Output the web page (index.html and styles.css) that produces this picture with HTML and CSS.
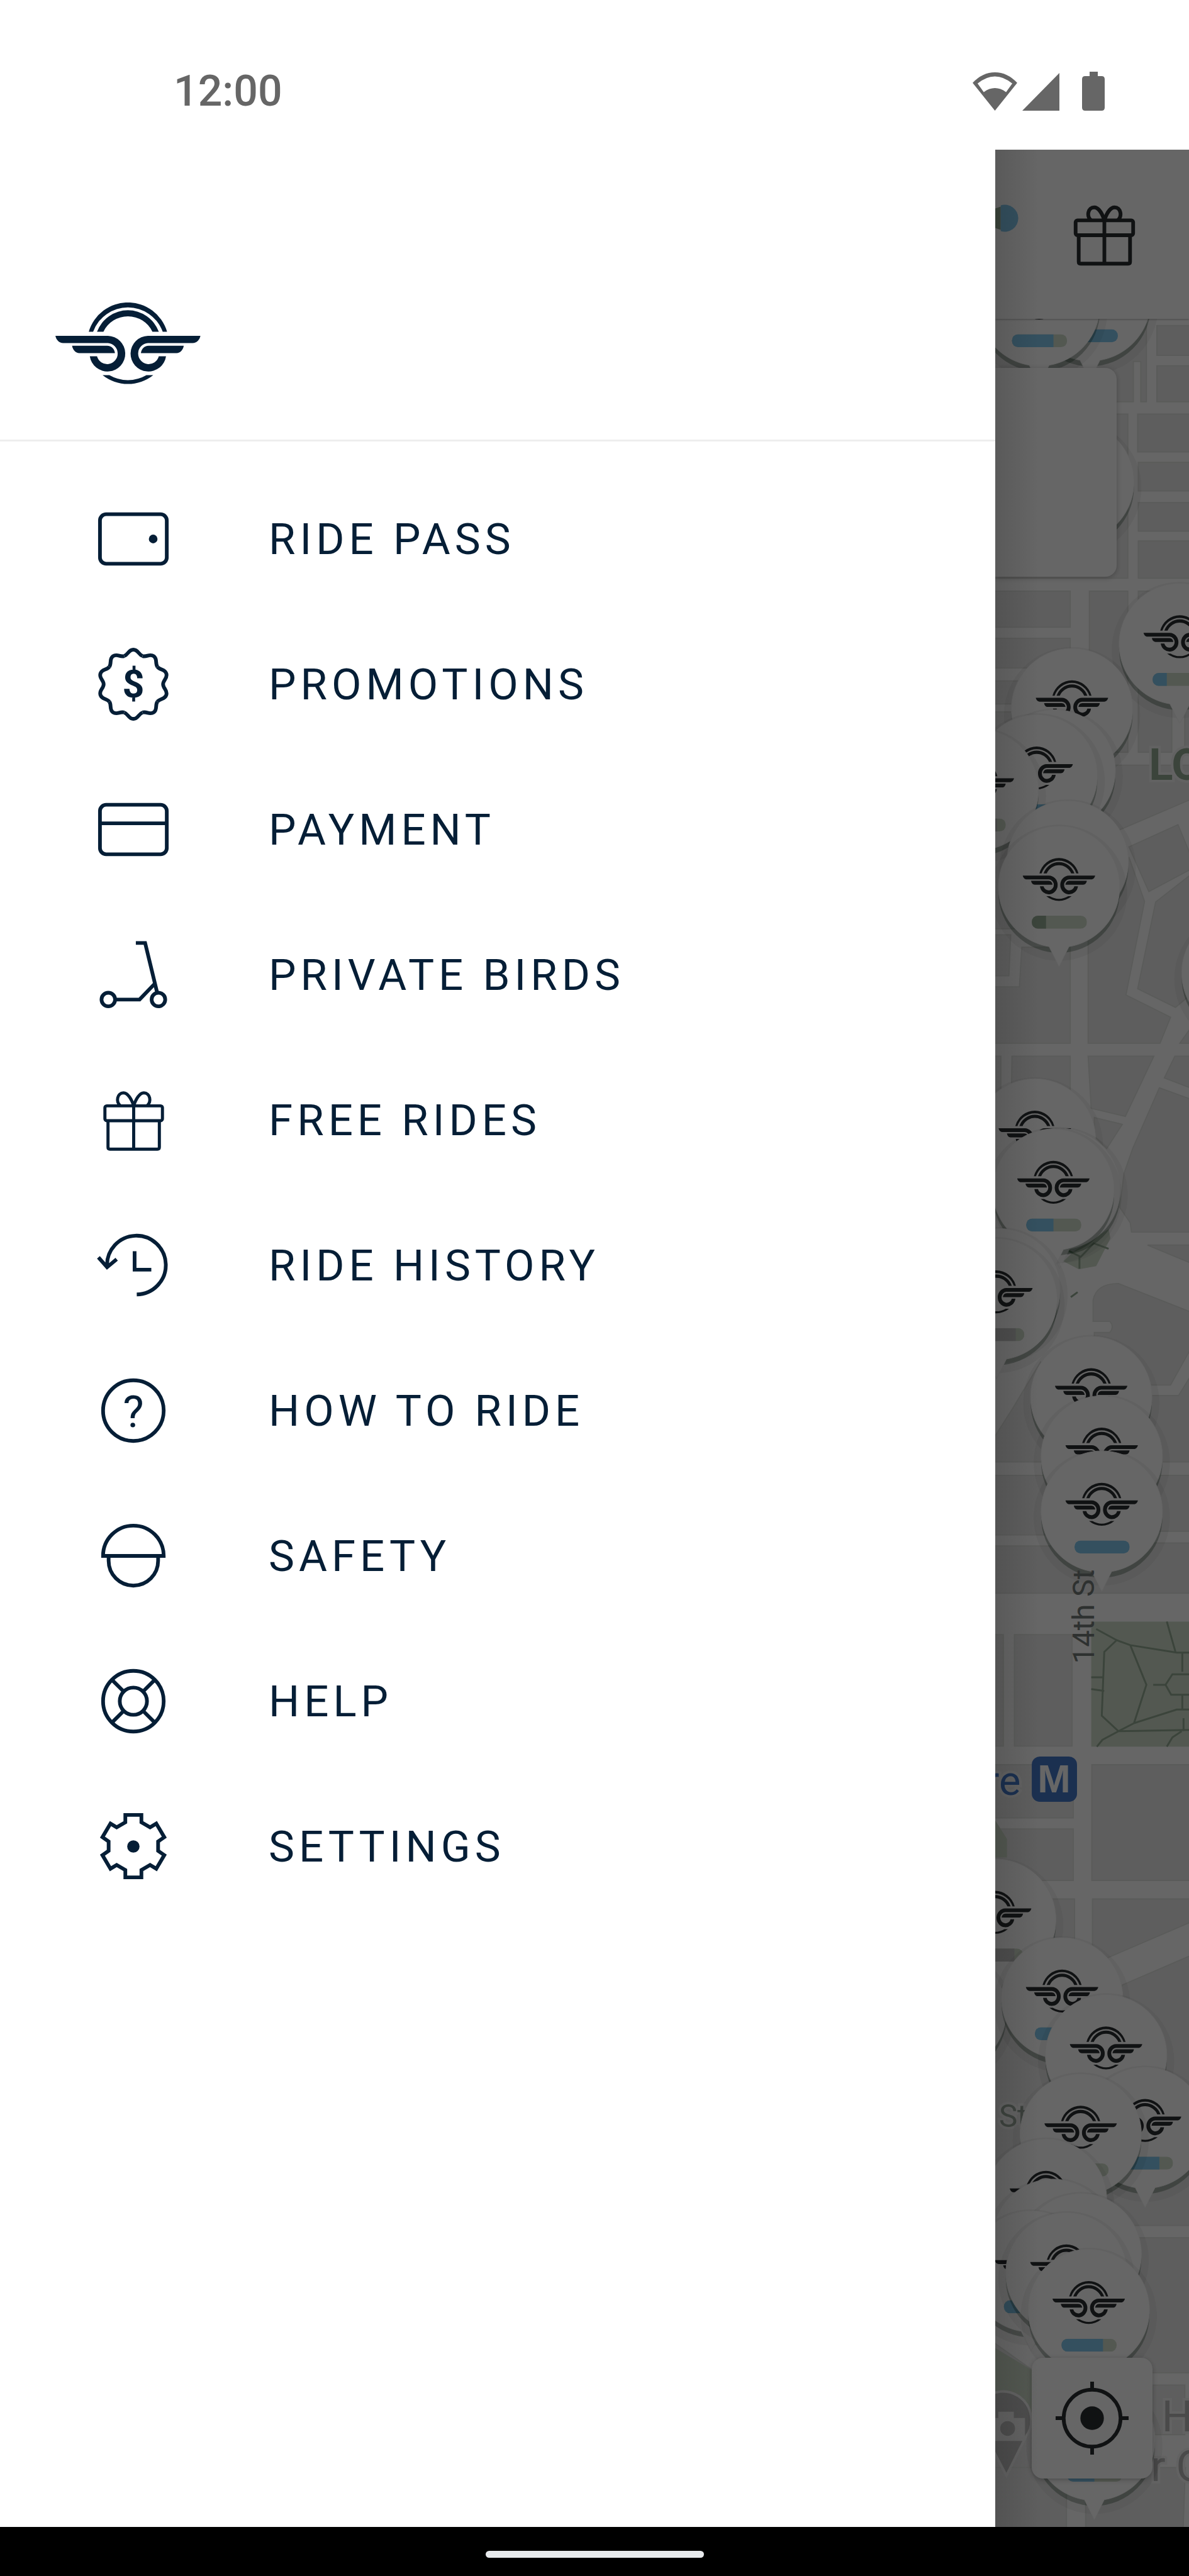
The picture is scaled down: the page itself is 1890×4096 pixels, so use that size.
FILE: index.html
```html
<!DOCTYPE html>
<html lang="en">
<head>
    <meta charset="UTF-8">
    <meta name="viewport" content="width=device-width, initial-scale=1.0">
    <title>Bird - Menu</title>
    <link rel="stylesheet" href="styles.css">
</head>
<body>
    <!-- Shared shapes -->
    <svg class="sprite" aria-hidden="true">
        <defs>
            <g id="half-logo">
                <path d="M87 247H342A86.500 86.500 0 1 1 254 346H289A51 51 0 1 0 342 282H125C104 282 91 266 87 247Z"/>
                <path d="M168 295H338C360 295 374 312 376 331H203C185 331 171 315 168 295Z"/>
            </g>
            <g id="logo">
                <path d="M249 227A198 198 0 0 1 629 227H608A180 180 0 0 0 270 227Z"/>
                <path d="M289 227A160 160 0 0 1 589 227H558A132 132 0 0 0 320 227Z"/>
                <use href="#half-logo"/>
                <use href="#half-logo" transform="translate(878) scale(-1 1)"/>
                <path d="M316 438H349A180 180 0 0 0 529 438H562A198 198 0 0 1 316 438Z"/>
            </g>
            <symbol id="gift" viewBox="0 0 120 120">
                <rect x="14" y="37" width="93" height="24" rx="3"/>
                <path d="M19 61V104Q19 107 22 107H99Q102 107 102 104V61M60.500 37V107"/>
                <path d="M60.500 37C57 26 51 16 44 16C34 16 31 30 39 37M60.500 37C64 26 70 16 77 16C87 16 90 30 82 37"/>
            </symbol>
            <path id="wave" d="M45.200 14.300C51.900 12.100 52 4 60 4S68.100 12.100 74.800 14.300"/>
            <g id="pin">
                <circle class="pin-glow" cy="8" r="110"/>
                <circle class="pin-shadow" cy="7" r="98"/>
                <path class="pin-body" d="M-16 95L0 127L16 95A98 98 0 1 0 -16 95Z"/>
                <use class="pin-logo" href="#logo" transform="translate(-73 -70) scale(.166 .175) translate(0 40)"/>
            </g>
            <clipPath id="bar-clip"><rect x="-44" y="45" width="89" height="21" rx="10"/></clipPath>
            <g id="pin-full"><use href="#pin"/><path class="bar-blue" clip-path="url(#bar-clip)" d="M-45 45H45V66H-45Z"/></g>
            <g id="pin-high"><use href="#pin"/><g clip-path="url(#bar-clip)"><path class="bar-rest" d="M-45 45H45V66H-45Z"/><path class="bar-blue" d="M-45 45H23V66H-45Z"/></g></g>
            <g id="pin-half"><use href="#pin"/><g clip-path="url(#bar-clip)"><path class="bar-rest" d="M-45 45H45V66H-45Z"/><path class="bar-blue" d="M-45 45H0V66H-45Z"/></g></g>
            <g id="pin-low"><use href="#pin"/><g clip-path="url(#bar-clip)"><path class="bar-rest" d="M-45 45H45V66H-45Z"/><path class="bar-blue" d="M-45 45H-21V66H-45Z"/></g></g>
            <g id="pin-empty"><use href="#pin"/><g clip-path="url(#bar-clip)"><path class="bar-rest" d="M-45 45H45V66H-45Z"/><path class="bar-green" d="M-45 45H-21V66H-45Z"/></g></g>
            <g id="pin-grey"><use href="#pin"/><g clip-path="url(#bar-clip)"><path class="bar-rest" d="M-45 45H45V66H-45Z"/><path class="bar-grey" d="M-45 45H31V66H-45Z"/></g></g>
        </defs>
    </svg>

    <header class="status-bar">
        <time>12:00</time>
        <div class="status-icons">
            <svg width="71" height="61" viewBox="0 0 72 62"><path fill-rule="evenodd" d="M36 62L0 17Q16 0 36 0T72 17ZM8 18L18 32Q36 19 54 32L64 18Q36-5 8 18Z"/></svg>
            <svg width="59" height="61" viewBox="0 0 60 62"><path d="M60 1V62H0Z"/></svg>
            <svg class="battery" width="36" height="62" viewBox="0 0 36 62"><path d="M12 0H25V7H31Q36 7 36 12V57Q36 62 31 62H5Q0 62 0 57V12Q0 7 5 7H12Z"/></svg>
        </div>
    </header>

    <main class="screen">
        <nav class="drawer" aria-label="Main menu">
            <div class="drawer-header">
                <svg class="brand" viewBox="87 85 705 397" role="img" aria-label="Bird"><use href="#logo"/></svg>
            </div>
            <ul class="menu">
                <li><a href="#">
                    <svg class="icon" viewBox="0 0 120 120"><rect x="6" y="20" width="108" height="80" rx="10"/><circle class="solid" cx="92" cy="60" r="7"/></svg>
                    <span>RIDE PASS</span>
                </a></li>
                <li><a href="#">
                    <svg class="icon" viewBox="0 0 120 120">
                        <use href="#wave"/><use href="#wave" transform="rotate(36 60 60)"/><use href="#wave" transform="rotate(72 60 60)"/>
                        <use href="#wave" transform="rotate(108 60 60)"/><use href="#wave" transform="rotate(144 60 60)"/><use href="#wave" transform="rotate(180 60 60)"/>
                        <use href="#wave" transform="rotate(216 60 60)"/><use href="#wave" transform="rotate(252 60 60)"/><use href="#wave" transform="rotate(288 60 60)"/>
                        <use href="#wave" transform="rotate(324 60 60)"/>
                        <text class="dollar" x="60" y="81">$</text>
                    </svg>
                    <span>PROMOTIONS</span>
                </a></li>
                <li><a href="#">
                    <svg class="icon" viewBox="0 0 120 120"><rect x="6" y="20" width="108" height="80" rx="10"/><path d="M6 50H114"/></svg>
                    <span>PAYMENT</span>
                </a></li>
                <li><a href="#">
                    <svg class="icon" viewBox="0 0 120 120"><circle cx="19.500" cy="100" r="11"/><circle cx="100.500" cy="100" r="11"/><path d="M64 8.500H79L98.500 89M31 100H70L94 75"/></svg>
                    <span>PRIVATE BIRDS</span>
                </a></li>
                <li><a href="#">
                    <svg class="icon thin"><use href="#gift"/></svg>
                    <span>FREE RIDES</span>
                </a></li>
                <li><a href="#">
                    <svg class="icon" viewBox="0 0 120 120"><path d="M65.500 107A47.500 47.500 0 1 0 17.500 62M3.500 47L17.500 63L33 50M62 37V67H89"/></svg>
                    <span>RIDE HISTORY</span>
                </a></li>
                <li><a href="#">
                    <svg class="icon" viewBox="0 0 120 120"><circle cx="60" cy="60" r="49"/><text class="question" x="60" y="86">?</text></svg>
                    <span>HOW TO RIDE</span>
                </a></li>
                <li><a href="#">
                    <svg class="icon" viewBox="0 0 120 120"><path d="M11 60A49 49 0 0 1 109 60ZM20 60V68A40 40 0 0 0 100 68V60"/></svg>
                    <span>SAFETY</span>
                </a></li>
                <li><a href="#">
                    <svg class="icon" viewBox="0 0 120 120"><circle cx="60" cy="60" r="49"/><circle cx="60" cy="60" r="22"/><path d="M25 25L44 44M95 25L76 44M25 95L44 76M95 95L76 76"/></svg>
                    <span>HELP</span>
                </a></li>
                <li><a href="#">
                    <svg class="icon" viewBox="0 0 120 120"><path d="M47 9H73V21L87 29L97 23L110 45L100 52V67L110 74L97 96L87 90L73 98V110H47V98L33 90L23 96L10 74L20 67V52L10 45L23 23L33 29L47 21Z"/><circle class="solid" cx="60" cy="60" r="10"/></svg>
                    <span>SETTINGS</span>
                </a></li>
            </ul>
        </nav>

        <section class="map" aria-label="Map">
            <svg class="map-canvas" viewBox="1607 242 313 3839" preserveAspectRatio="xMinYMin slice">
                <!-- City blocks -->
                <g class="blocks">
                    <path d="M1868 526H1930V574H1868ZM1868 591H1930V649H1868ZM1837 669H1930V730H1837ZM1838 747H1930V793H1838ZM1838 812H1930V858H1838ZM1838 874H1930V934H1838Z"/>
                    <path d="M1600 500H1851V649H1842V584H1830V649H1600ZM1600 669H1821V934H1600Z"/>
                    <path d="M1600 955H1728V1013H1600ZM1600 1031H1728V1079H1600ZM1600 1100H1728V1137H1600ZM1600 1150H1728V1500H1600ZM1759 955H1821V1215H1759ZM1838 955H1930V1140H1892V1215H1838ZM1913 1140H1930V1215H1913Z"/>
                    <path d="M1759 1236H1930V1288L1806 1341L1759 1330ZM1823 1368L1902 1332L1930 1400L1855 1440ZM1757 1390L1823 1385L1848 1456L1818 1607L1890 1643L1873 1685H1757ZM1866 1457L1930 1407V1600L1898 1627L1837 1597Z"/>
                    <path d="M1600 1510H1632L1629 1576H1600ZM1650 1530H1728V1685H1600V1594H1646ZM1600 1706H1616V1800H1600ZM1634 1706H1728V1880H1632ZM1757 1706H1863L1817 1803L1762 1790ZM1905 1685L1930 1650V1685ZM1897 1706H1930V1760L1880 1741ZM1872 1757L1930 1778V1990H1827L1825 1975L1808 1950L1815 1895L1829 1855ZM1767 1805L1812 1816L1787 1855L1767 1835Z"/>
                    <path d="M1853 2011H1930V2043ZM1765 2100Q1770 2073 1806 2073L1930 2122V2165L1890 2237H1767V2152H1792Q1800 2143 1792 2134H1765ZM1635 2275L1680 2200L1720 2300L1700 2361H1607L1600 2330ZM1700 2254H1903L1930 2210V2361H1700Z"/>
                    <path d="M1600 2383H1930V2473H1700V2479H1600ZM1600 2497H1700V2492H1930V2573H1600ZM1600 2640H1620V2820H1600ZM1638 2640H1731V2820H1638Z"/>
                    <path d="M1600 2850H1733V2936H1600ZM1763 2850H1930V3037H1763ZM1600 2954H1733V3037H1600ZM1600 3067H1735V3600H1600ZM1764 3067H1930V3101L1788 3162L1764 3150ZM1812 3206L1930 3155V3594H1700ZM1820 3614H1930V3832H1820ZM1600 3780L1670 3830V3985H1600ZM1861 3852H1913V3932H1861ZM1600 3985H1722V4090H1600ZM1753 3985H1914L1910 4090H1753Z"/>
                </g>
                <path class="park" d="M1762 2619H1930V2821H1762ZM1717 2037L1735 2020L1790 1985L1793 2000L1770 2045L1742 2050ZM1607 2940L1626 2970V3000H1607ZM1607 3792L1670 3830V3925L1607 3870Z"/>
                <path class="park-path" d="M1770 2631L1803 2649L1825 2657L1900 2669H1930M1803 2649L1783 2668L1779 2771L1806 2796L1924 2794M1825 2657L1851 2721L1831 2783L1900 2761H1930M1762 2709H1781M1762 2728L1783 2731M1862 2721H1882L1893 2704H1930M1882 2721L1891 2737H1930M1884 2619L1898 2668M1909 2670V2700M1909 2738V2760M1911 2775V2796M1806 2796L1831 2783M1806 2796L1780 2810L1771 2821M1908 2796L1893 2806L1884 2821"/>
                <path class="park-path" d="M1725 2020L1745 2030L1766 2008L1790 2017M1743 2028V2049M1729 2095L1740 2087"/>

                <!-- Labels -->
                <text class="label label-area" x="1855" y="1260">LO</text>
                <text class="label label-metro" x="1648" y="2899" text-anchor="end">re</text>
                <rect class="metro" x="1666" y="2837" width="73" height="73" rx="13"/>
                <text class="metro-m" x="1702" y="2895">M</text>
                <text class="label label-street" x="1613" y="3435">St</text>
                <text class="label label-place" x="1876" y="3927">H</text>
                <text class="label label-place" x="1858" y="4007">r C</text>

                <!-- Photo spot -->
                <path class="photo-pin" d="M1625 3998L1600 3950A46 46 0 1 1 1656 3936Z"/>
                <path class="photo-camera" d="M1604 3905H1612V3895H1637V3905H1655V3942H1604Z"/>
                <circle class="photo-lens" cx="1627" cy="3922" r="12"/>

                <!-- Vehicles, back to front -->
                <use href="#pin-full" x="1760" y="487"/>
                <use href="#pin-high" x="1678" y="495"/>
                <use href="#pin" x="1733" y="780"/>
                <use href="#pin-low" x="1905" y="1042"/>
                <use href="#pin" x="1731" y="1147"/>
                <use href="#pin" x="1703" y="1246"/>
                <use href="#pin-high" x="1674" y="1254"/>
                <use href="#pin-grey" x="1579" y="1277"/>
                <use href="#pin" x="1724" y="1393"/>
                <use href="#pin-empty" x="1710" y="1434"/>
                <use href="#pin" x="2006" y="1573"/>
                <use href="#pin" x="1671" y="1842"/>
                <use href="#pin" x="1711" y="1922"/>
                <use href="#pin-half" x="1701" y="1923"/>
                <use href="#pin" x="1614" y="2084"/>
                <use href="#pin-grey" x="1609" y="2100"/>
                <use href="#pin" x="1762" y="2258"/>
                <use href="#pin" x="1779" y="2354"/>
                <use href="#pin-full" x="1779" y="2443"/>
                <text class="label-14th" transform="translate(1766 2687) rotate(-90)">14th St</text>
                <use href="#pin" x="1520" y="3160"/>
                <use href="#pin-grey" x="1607" y="3102"/>
                <use href="#pin" x="1527" y="3250"/>
                <use href="#pin-half" x="1715" y="3229"/>
                <use href="#pin" x="1786" y="3321"/>
                <use href="#pin-high" x="1849" y="3438"/>
                <use href="#pin-low" x="1745" y="3449"/>
                <use href="#pin" x="1689" y="3554"/>
                <use href="#pin" x="1700" y="3619"/>
                <use href="#pin" x="1745" y="3642"/>
                <use href="#pin-half" x="1665" y="3670"/>
                <use href="#pin" x="1722" y="3673"/>
                <use href="#pin-half" x="1767" y="3942"/>
                <use href="#pin-high" x="1758" y="3732"/>
            </svg>

            <div class="map-bar">
                <svg class="ride-dot" width="38" height="44" viewBox="0 0 39 44"><path class="ride-dot-rest" d="M0 6L9 3V41L0 38Z"/><path class="ride-dot-fill" d="M9 1A22 22 0 1 1 9 43Z"/></svg>
                <button class="icon-button" type="button" aria-label="Free rides"><svg class="icon"><use href="#gift"/></svg></button>
            </div>
            <div class="map-card"></div>
            <button class="locate-button" type="button" aria-label="My location">
                <svg class="icon" viewBox="0 0 120 120"><circle cx="60" cy="60" r="46"/><path d="M60 1V13M60 107V119M1 60H13M107 60H119"/><circle class="solid" cx="60" cy="60" r="19"/></svg>
            </button>
            <div class="scrim"></div>
        </section>
    </main>

    <footer class="nav-bar"><span class="nav-handle"></span></footer>
</body>
</html>
```

FILE: styles.css
```css
:root {
    --ink: #051e36;
    --map-ink: #2a2d30;
    --status: #666666;
    --line: #eeeeee;
    --blue: #82c8ee;
    --green: #d0dccb;
    --green-dark: #94aa94;
}

* {
    margin: 0;
    padding: 0;
    box-sizing: border-box;
}

body {
    display: flex;
    flex-direction: column;
    min-height: 100vh;
    background-color: #ffffff;
    color: var(--ink);
    font-family: Roboto, "Liberation Sans", sans-serif;
}

.sprite {
    position: absolute;
    width: 0;
    height: 0;
}

/* Status bar */
.status-bar {
    display: flex;
    justify-content: space-between;
    align-items: center;
    height: 238px;
    padding: 52px 134px 0 276px;
    color: var(--status);
}

.status-bar time {
    font-size: 68px;
    font-weight: 500;
    line-height: 80px;
}

.status-icons {
    display: flex;
    align-items: center;
    gap: 8px;
    fill: var(--status);
}

.battery {
    margin-left: 28px;
}

.screen {
    flex: 1;
    display: flex;
}

/* Drawer */
.drawer {
    flex: 1;
}

.drawer-header {
    height: 464px;
    padding: 243px 88px 0;
    border-bottom: 3px solid var(--line);
}

.brand {
    display: block;
    width: 231px;
    height: 130px;
    fill: var(--ink);
}

.menu {
    list-style: none;
    padding-top: 39px;
}

.menu a {
    display: flex;
    align-items: center;
    gap: 156px;
    height: 231px;
    padding-left: 153px;
    color: var(--ink);
    font-size: 69px;
    line-height: 80px;
    letter-spacing: 7px;
    text-decoration: none;
}

.menu span {
    padding-top: 3px;
}

.icon {
    display: block;
    width: 118px;
    height: 118px;
    fill: none;
    stroke: currentColor;
    stroke-width: 6;
}

.icon.thin {
    stroke-width: 5;
}

.solid {
    fill: currentColor;
    stroke: none;
}

.dollar,
.question {
    fill: currentColor;
    stroke: none;
    text-anchor: middle;
    letter-spacing: 0;
}

.dollar {
    font-size: 62px;
    font-weight: 700;
}

.question {
    font-size: 72px;
}

/* Map */
.map {
    position: relative;
    width: 308px;
    overflow: hidden;
    background-color: #ffffff;
    color: var(--map-ink);
}

.map-canvas {
    position: absolute;
    inset: 0;
    width: 100%;
    height: 100%;
}

.blocks {
    fill: #ececec;
    stroke: #e2e4e0;
    stroke-width: 2;
}

.park {
    fill: var(--green);
}

.park-path {
    fill: none;
    stroke: var(--green-dark);
    stroke-width: 3;
}

.label {
    stroke: #f6f6f6;
    stroke-width: 8;
    paint-order: stroke;
}

.label-area {
    fill: var(--green-dark);
    font-size: 72px;
    font-weight: 700;
}

.label-metro {
    fill: #4478c8;
    font-size: 66px;
}

.label-street {
    fill: #9aa89c;
    font-size: 50px;
}

.label-14th {
    fill: #737a78;
    font-size: 48px;
}

.label-place {
    fill: #b8b8b8;
    font-size: 70px;
}

.metro {
    fill: #4478c8;
}

.metro-m {
    fill: #ffffff;
    font-family: "Liberation Sans", sans-serif;
    font-size: 64px;
    font-weight: 700;
    text-anchor: middle;
}

.photo-pin {
    fill: #c0c0c0;
    stroke: #f6f6f6;
    stroke-width: 4;
}

.photo-camera {
    fill: #f6f6f6;
}

.photo-lens {
    fill: #c0c0c0;
}

.pin-glow {
    fill: #000000;
    opacity: 0.05;
}

.pin-shadow {
    fill: #10301c;
    opacity: 0.3;
}

.pin-body {
    fill: #ffffff;
    stroke: #f6f6f6;
    stroke-width: 1;
}

.pin-logo {
    fill: var(--map-ink);
}

.bar-blue,
.ride-dot-fill {
    fill: var(--blue);
}

.bar-rest {
    fill: var(--green);
}

.bar-green,
.ride-dot-rest {
    fill: var(--green-dark);
}

.bar-grey {
    fill: #c3c3c3;
}

.map-bar {
    position: relative;
    display: flex;
    justify-content: space-between;
    align-items: center;
    height: 269px;
    padding-right: 76px;
    background-color: #ffffff;
    box-shadow: 0 1px 3px rgba(0, 0, 0, 0.3);
}

.ride-dot {
    align-self: flex-start;
    margin-top: 87px;
}

.icon-button {
    border: none;
    background: none;
    color: inherit;
    cursor: pointer;
}

.map-card {
    position: absolute;
    top: 347px;
    left: 0;
    width: 193px;
    height: 332px;
    border-radius: 0 18px 18px 0;
    background-color: #ffffff;
    box-shadow: 0 2px 8px rgba(0, 0, 0, 0.25);
}

.locate-button {
    position: absolute;
    right: 58px;
    bottom: 77px;
    display: flex;
    align-items: center;
    justify-content: center;
    width: 192px;
    height: 192px;
    border: none;
    border-radius: 18px;
    background-color: #ffffff;
    box-shadow: 0 2px 8px rgba(0, 0, 0, 0.25);
    color: inherit;
    cursor: pointer;
}

.scrim {
    position: absolute;
    inset: 0;
    background: linear-gradient(to right, rgba(0, 0, 0, 0.12), transparent 70px), rgba(0, 0, 0, 0.6);
}

/* System navigation */
.nav-bar {
    display: flex;
    align-items: center;
    justify-content: center;
    height: 78px;
    padding-top: 8px;
    background-color: #000000;
}

.nav-handle {
    width: 347px;
    height: 11px;
    border-radius: 6px;
    background-color: #e8eaed;
}
```
